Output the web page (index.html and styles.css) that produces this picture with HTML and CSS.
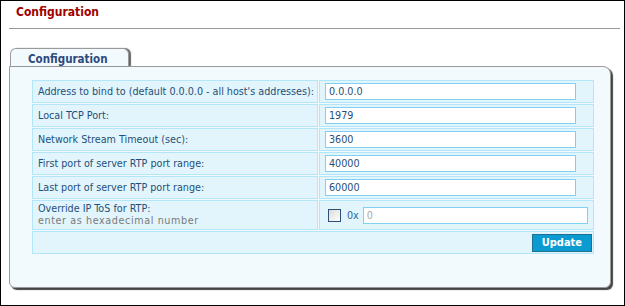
FILE: index.html
```html
<!DOCTYPE html>
<html>

<head>
    <title>Configuration</title>
    <link rel="stylesheet" href="styles.css">
</head>

<body>
    <div class="frame">
        <h1 class="page-title">Configuration</h1>
        <div class="rule"></div>
        <div class="tabs">
            <div class="tab">Configuration</div>
        </div>
        <div class="panel">
            <table class="config-table">
                <colgroup>
                    <col class="label-col">
                    <col>
                </colgroup>
                <tr>
                    <td class="label">Address to bind to (default 0.0.0.0 - all host's addresses):</td>
                    <td class="value"><input type="text" class="field" value="0.0.0.0"></td>
                </tr>
                <tr>
                    <td class="label">Local TCP Port:</td>
                    <td class="value"><input type="text" class="field" value="1979"></td>
                </tr>
                <tr>
                    <td class="label">Network Stream Timeout (sec):</td>
                    <td class="value"><input type="text" class="field" value="3600"></td>
                </tr>
                <tr>
                    <td class="label">First port of server RTP port range:</td>
                    <td class="value"><input type="text" class="field" value="40000"></td>
                </tr>
                <tr>
                    <td class="label">Last port of server RTP port range:</td>
                    <td class="value"><input type="text" class="field" value="60000"></td>
                </tr>
                <tr>
                    <td class="label tall">Override IP ToS for RTP:<br><span class="hint">enter as hexadecimal number</span></td>
                    <td class="value">
                        <div class="tos">
                            <span class="check"></span>
                            <span class="prefix">0x</span>
                            <input type="text" class="field tos-field" placeholder="0">
                        </div>
                    </td>
                </tr>
                <tr>
                    <td class="actions" colspan="2"><button class="update">Update</button></td>
                </tr>
            </table>
        </div>
    </div>
</body>

</html>
```

FILE: styles.css
```css
html,
body {
    margin: 0;
    background-color: #ffffff;
    font-family: 'DejaVu Sans Condensed', 'DejaVu Sans', sans-serif;
}

.frame {
    width: 625px;
    height: 306px;
    box-sizing: border-box;
    border: 1px solid #000000;
}

.page-title {
    margin: 0;
    padding: 4px 0 0 15px;
    height: 18px;
    font-size: 12px;
    font-weight: bold;
    color: #a00000;
}

.rule {
    margin: 5px 4px 0 8px;
    border-top: 1px solid #999999;
}

.tabs {
    display: flex;
    margin: 19px 0 0 9px;
}

.tab {
    width: 119px;
    height: 18px;
    padding: 0 0 0 17px;
    box-sizing: border-box;
    line-height: 20px;
    font-size: 11.5px;
    font-weight: bold;
    color: #2c4a80;
    background-color: #f3fafd;
    border: 1px solid #9a9a9a;
    border-bottom: none;
    border-radius: 6px 6px 0 0;
    box-shadow: 2px 0 1px #666666;
    position: relative;
    z-index: 1;
}

.panel {
    width: 602px;
    height: 222px;
    margin-left: 8px;
    box-sizing: border-box;
    padding: 12px 0 0 21px;
    background-color: #f3fafd;
    border: 1px solid #9a9a9a;
    border-radius: 0 8px 6px 6px;
    box-shadow: 2px 2px 1px #444444;
}

.config-table {
    border-collapse: separate;
    border-spacing: 1px;
    table-layout: fixed;
    width: 564px;
    font-size: 10.7px;
    color: #1f4f7a;
}

.label-col {
    width: 286px;
}

.config-table td {
    background-color: #e2f5fc;
    border: 1px solid #b3e6f8;
    height: 21px;
    padding: 0 5px;
    white-space: nowrap;
    overflow: hidden;
}

.config-table td.tall {
    height: 28px;
    line-height: 12px;
}

.hint {
    color: #7a7a7a;
    letter-spacing: 0.6px;
}

.field {
    width: 251px;
    height: 17px;
    box-sizing: border-box;
    border: 1px solid #7fd0f2;
    padding: 0 3px;
    font-family: 'DejaVu Sans Condensed', 'DejaVu Sans', sans-serif;
    font-size: 10.7px;
    color: #1f4f7a;
    margin: 1px 0;
    display: block;
}

.tos {
    display: flex;
    align-items: center;
    gap: 5px;
    padding-left: 3px;
}

.check {
    width: 11px;
    height: 11px;
    flex: none;
    border: 1px solid #2b4f7a;
    background: linear-gradient(135deg, #dcdcd6, #ffffff);
}

.prefix {
    color: #2b6aa0;
    margin-left: 1px;
}

.tos-field {
    width: 230px;
    height: 17px;
    margin-left: -1px;
}

.tos-field::placeholder {
    color: #aaaaaa;
}

.config-table td.actions {
    text-align: right;
    height: 21px;
    padding: 0 1px;
}

.update {
    height: 18px;
    padding: 0 9px;
    border: 1px solid #1e6f95;
    background-color: #0b9bd0;
    color: #ffffff;
    font-family: 'DejaVu Sans Condensed', 'DejaVu Sans', sans-serif;
    font-size: 11px;
    font-weight: bold;
}
```
